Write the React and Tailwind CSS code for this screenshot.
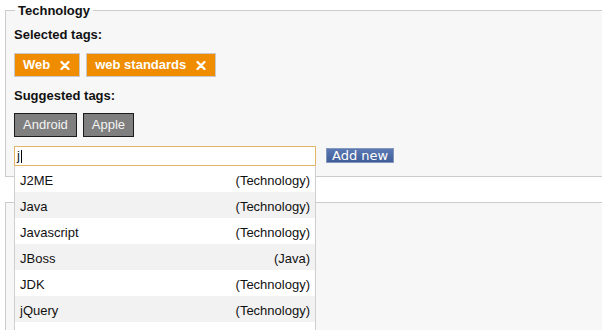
import React from "react";

function XIcon() {
  return (
    <svg width="10" height="9" viewBox="0 0 10 9" className="block">
      <path d="M1.5 1 L8.5 8 M8.5 1 L1.5 8" stroke="#ffffff" strokeWidth="2.3" strokeLinecap="round" />
    </svg>
  );
}

function SelectedTag({ label }) {
  return (
    <div className="flex items-center h-[24px] border border-[#c9c9c9] bg-[#ef8c00] pl-[8px] pr-[9px] text-white font-bold leading-[22px]">
      <span>{label}</span>
      <span className="ml-[10px]">
        <XIcon />
      </span>
    </div>
  );
}

function SuggestedTag({ label }) {
  return (
    <div className="h-[24px] border border-[#1c1c1c] bg-[#7f7f7f] px-[8px] text-[#f4f4f4] leading-[22px]">
      {label}
    </div>
  );
}

const items = [
  ["J2ME", "(Technology)"],
  ["Java", "(Technology)"],
  ["Javascript", "(Technology)"],
  ["JBoss", "(Java)"],
  ["JDK", "(Technology)"],
  ["jQuery", "(Technology)"],
  ["", ""],
];

export default function App() {
  return (
    <div className="relative w-[602px] h-[330px] overflow-hidden bg-white text-[13px] text-[#111] font-['Liberation_Sans',Arial,sans-serif]">
      <fieldset className="ml-[5px] mt-[3px] w-[640px] border border-[#cccccc] bg-[#f7f7f7] pl-[8px] pb-[10px]">
        <legend className="ml-[1px] px-[3px] font-bold leading-[15px]">Technology</legend>
        <div className="mt-[9px] font-bold leading-[15px]">Selected tags:</div>
        <div className="mt-[11px] flex gap-[6px]">
          <SelectedTag label="Web" />
          <SelectedTag label="web standards" />
        </div>
        <div className="mt-[11px] font-bold leading-[15px]">Suggested tags:</div>
        <div className="mt-[10px] flex gap-[6px]">
          <SuggestedTag label="Android" />
          <SuggestedTag label="Apple" />
        </div>
        <div className="mt-[9px] flex items-start">
          <div className="relative w-[302px]">
            <div className="flex items-center h-[20px] border border-[#e2b56a] bg-white pl-[2px]">
              <span className="leading-[16px]">j</span>
              <span className="ml-[1px] w-px h-[13px] bg-black" />
            </div>
            <div className="absolute left-0 top-full z-10 w-[302px] border-l border-r border-[#cfcfcf]">
              {items.map(([name, cat], i) => (
                <div
                  key={i}
                  className={`flex items-center justify-between h-[26px] px-[5px] pt-[2px] leading-[15px] ${
                    i % 2 === 1 ? "bg-[#f2f2f2]" : "bg-white"
                  }`}
                >
                  <span>{name}</span>
                  <span>{cat}</span>
                </div>
              ))}
            </div>
          </div>
          <button className="ml-[10px] mt-[2px] h-[15px] border border-[#8497bd] bg-gradient-to-b from-[#5b79b3] to-[#3f5d98] px-[5px] text-white text-[13px] leading-[13px] font-['DejaVu_Sans',Verdana,sans-serif]">
            Add new
          </button>
        </div>
      </fieldset>
      <div className="mt-[25px] ml-[5px] w-[640px] h-[200px] border-t border-l border-[#cccccc] bg-[#f7f7f7]" />
    </div>
  );
}
